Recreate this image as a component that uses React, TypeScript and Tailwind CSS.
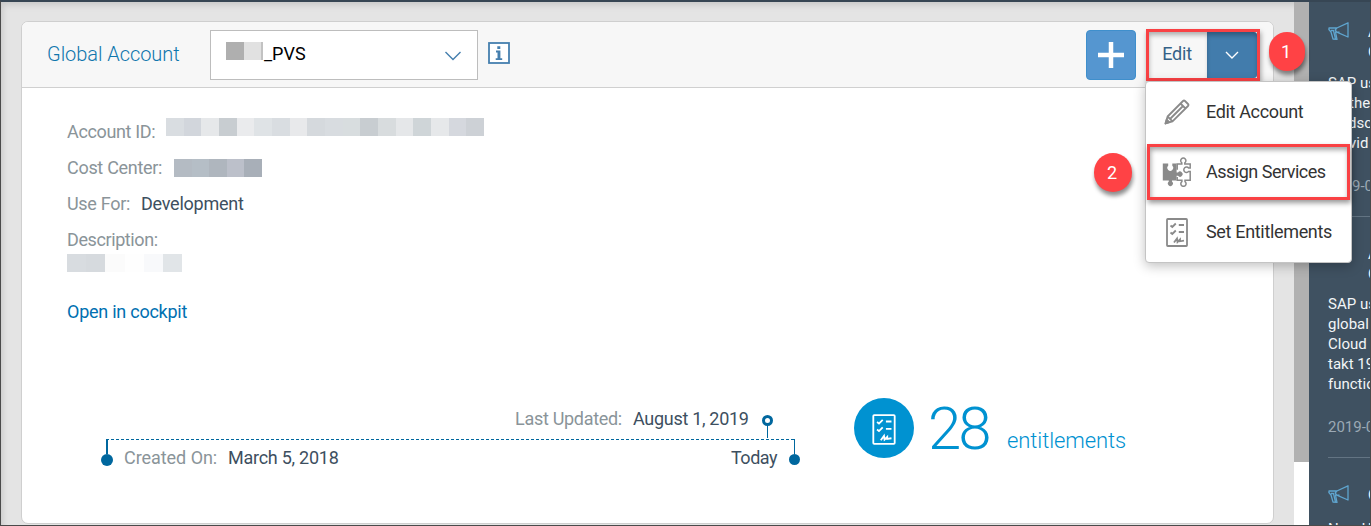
import type { ReactNode } from "react";

function Megaphone() {
  return (
    <svg className="shrink-0" width="22" height="20" viewBox="0 0 22 20" fill="none" stroke="#5fa5cf" strokeWidth="1.3" strokeLinejoin="round">
      <path d="M8.8 6 L20 0.8 V15 L8.8 10.2 M8.8 6 H1 L0.9 7.5 L3 10 L5 17 L9 17.4 L7.5 10.2 H11.5 M8.8 6 L7.2 8 L8.8 10.2 M3 8.5 H5.5 L7.5 17" />
    </svg>
  );
}

function Checklist({ className, w, h, s }: { className: string; w: number; h: number; s: number }) {
  return (
    <svg className={className} width={w} height={h} viewBox="0 0 22 29" fill="none" stroke="currentColor" strokeWidth={s}>
      <rect x="1" y="1" width="20" height="27" rx="0.8" />
      <path d="M4.5 7.5 L6.3 9 L9.8 5.5 M4.5 14.5 L6.3 16 L9.8 12.5 M12.8 7 H18 M12.8 14 H18 M8 24.5 L11 20.5 L11.5 24 L14 21.5 V23.3 L18 22.7" />
    </svg>
  );
}

function Pencil() {
  return (
    <svg width="26" height="26" viewBox="0 0 26 26" fill="none" stroke="#8a8a8a" strokeWidth="1.8" strokeLinejoin="round">
      <path d="M1.5 24.5 L3.6 17.5 L19 2 Q20 1 21 2 L24 5 Q25 6 24 7 L8.5 22.4 Z M16.5 4.5 L21.5 9.5 M19 7 L6 20 M3.6 17.5 L8.5 22.4" />
      <path d="M1.5 24.5 L2.7 20.5 L5.3 23.2 Z" fill="#8a8a8a" />
    </svg>
  );
}

function Puzzle() {
  return (
    <svg width="30" height="30" viewBox="0 0 30 30" fill="none" stroke="#8a8a8a" strokeWidth="1.5">
      <path fill="#8a8a8a" stroke="none" d="M0.8 6.5 H6.2 V8.8 A2.9 2.9 0 1 0 10.3 8.8 V6.5 H14.6 V15.4 H16 A2.6 2.6 0 1 1 16 18.8 H14.6 V23.5 H10 V24.6 A2.5 2.5 0 1 1 6.8 24.6 V23.5 H0.8 Z" />
      <path d="M15.2 12.8 V7 H19.8 V5.8 A2.6 2.6 0 1 1 22.8 5.8 V7 H28.2 V11 H26.6 A2.7 2.7 0 1 0 26.6 14.4 H28.2 V23.3 H23 V24.6 A2.6 2.6 0 1 1 19.9 24.6 V23.3 H15.2 V20" />
    </svg>
  );
}

function Mosaic({ colors, className }: { colors: string[]; className: string }) {
  return (
    <div className={"flex h-[18px] " + className}>
      {colors.map((c, i) => (
        <i key={i} className="block h-full flex-1" style={{ backgroundColor: c }} />
      ))}
    </div>
  );
}

function Label({ children, w }: { children: ReactNode; w: string }) {
  return <span className={"shrink-0 text-[#8a9499] " + w}>{children}</span>;
}

const idColors = ["#d9dde1", "#d2d6dc", "#e6e8ea", "#c8cdd1", "#eaebed", "#dfe3e6", "#d9dde1", "#e8e9eb", "#d5d9dd", "#d8dce0", "#d8dddf", "#c8cdd1", "#d8dcde", "#e5e7e9", "#cfd5d8", "#e6e8ea", "#d5d8de", "#cdd1d6"];

function MenuItem({ icon, text, spacing }: { icon: ReactNode; text: string; spacing: string }) {
  return (
    <div className="flex h-[60px] items-center text-[18px] text-[#333]">
      <span className="ml-[15px] flex w-[31px] justify-center">{icon}</span>
      <span className={"ml-[14px] whitespace-nowrap " + spacing}>{text}</span>
    </div>
  );
}

export default function App() {
  return (
    <div className="relative flex h-[526px] w-[1371px] overflow-hidden bg-[#e4e4e4] font-['Roboto',sans-serif] text-[18px] leading-[24px]">
      <div className="w-[1294px] pt-[21px] pl-[21px] shadow-[inset_5px_7px_6px_-2px_#c9c9c9]">
        <main className="h-[503px] w-[1253px] overflow-hidden rounded-[7px] border border-[#cfcfcf] bg-white">
          <header className="flex h-[66px] items-center border-b border-[#d0d0d0] bg-[#f7f7f7] pl-[25px]">
            <h1 className="-mt-[2px] w-[163px] whitespace-nowrap text-[20px] font-light tracking-[-0.05px] text-[#0f76ad]">Global Account</h1>
            <div className="flex h-[50px] w-[268px] items-center border border-[#bdbdbd] bg-white pl-[15px] text-black">
              <div className="mb-[7px] flex h-[18px] w-[37px]">
                <i className="w-[18px] bg-[#afafaf]" />
                <i className="w-[17px] bg-[#e1e1e1]" />
                <i className="w-[2px] bg-[#c2c2c2]" />
              </div>
              <span className="-mt-[2px] ml-px w-[171px]">_PVS</span>
              <svg width="18" height="10" viewBox="0 0 18 10" fill="none" stroke="#457fae" strokeWidth="1.4" className="ml-[9px] mt-[2px]">
                <path d="M1.5 1 L9 8.5 L16.5 1" />
              </svg>
            </div>
            <svg width="22" height="22" viewBox="0 0 22 22" className="ml-[10px] -mt-[4px]">
              <rect x="1" y="1" width="20" height="20" fill="#fff" stroke="#457fae" strokeWidth="1.8" />
              <path fill="#457fae" d="M9.3 4.2 h3 v2.8 h-3z M8 8.6 h4.4 v7.6 h1.8 v1.8 H7.7 v-1.8 h1.8 v-5.8 H8z" />
            </svg>
            <button className="ml-[576px] flex h-[50px] w-[50px] items-center justify-center rounded-[4px] border border-[#3f8fcc] bg-[#5596d0]">
              <svg width="26" height="26" stroke="#fff" strokeWidth="4.5" className="mt-px"><path d="M0 13 H26 M13 0 V26" /></svg>
            </button>
            <div className="mt-px ml-[10px] flex h-[52px] w-[114px] border-[3px] border-[#f94144] shadow-[1px_3px_5px_rgba(0,0,0,.35)]">
              <span className="flex w-[58px] items-center justify-center bg-[#f7f7f7] pr-[2px] pb-[3px] tracking-[-0.2px] text-[#346187] shadow-[inset_1px_4px_5px_-1px_rgba(0,0,0,.3)]">Edit</span>
              <span className="flex flex-1 items-center justify-center rounded-r-[3px] bg-[#427cac] shadow-[inset_0_4px_5px_-1px_rgba(0,0,0,.3)]">
                <svg width="14" height="9" fill="none" stroke="#fff" strokeWidth="1.4"><path d="M1 1 L7 7 L13 1" /></svg>
              </span>
            </div>
          </header>
          <section className="pl-[45px] pt-[31px]">
            <div className="flex h-[36px] pt-px">
              <Label w="w-[99px] tracking-[-0.35px]">Account ID:</Label>
              <Mosaic colors={idColors} className="-mt-[2px] w-[318px]" />
            </div>
            <div className="flex h-[36px] pt-px">
              <Label w="w-[107px] tracking-[-0.3px]">Cost Center:</Label>
              <Mosaic colors={["#b4bbc3", "#b5bec6", "#afb6be", "#bcc0ca", "#a8afb8"]} className="mt-[3px] w-[88px]" />
            </div>
            <div className="flex h-[36px] pt-px">
              <Label w="w-[74px] tracking-[-0.3px]">Use For:</Label>
              <span className="tracking-[-0.25px] text-[#3d4f60]">Development</span>
            </div>
            <div className="h-[25px] pt-px"><Label w="tracking-[-0.4px]">Description:</Label></div>
            <Mosaic colors={["#d8dce0", "#d6dade", "#fbfbfb", "#fefefe", "#f8f9fb", "#e1e5e8"]} className="mt-[2px] w-[115px]" />
            <div className="mt-[28px] tracking-[-0.25px] text-[#0070b1]">Open in cockpit</div>
          </section>
          <section className="flex pt-[73px] pl-[79px]">
            <div className="w-[700px] pt-[10px]">
              <div className="flex h-[31px] pl-[414px]">
                <Label w="w-[118px] tracking-[-0.3px]">Last Updated:</Label>
                <span className="w-[129px] tracking-[-0.3px] text-[#3d4f60]">August 1, 2019</span>
                <div className="flex w-[11px] flex-col items-center pt-[8px]">
                  <i className="h-[11px] w-[11px] rounded-full border-[3px] border-[#00679e] bg-white" />
                  <i className="w-px flex-1 bg-[#00679e]" />
                </div>
              </div>
              <svg width="695" height="1" className="ml-[5px] mt-px block"><path d="M0 .5 H689" stroke="#00679e" strokeDasharray="3 2" /></svg>
              <div className="flex h-[32px]">
                <div className="flex w-[12px] flex-col items-center">
                  <i className="-mt-px h-[15px] w-[2px] bg-[#00679e]" />
                  <i className="h-[12px] w-[12px] rounded-full bg-[#00679e]" />
                </div>
                <div className="flex pt-[6px] pl-[11px]">
                  <Label w="w-[104px] tracking-[-0.05px]">Created On:</Label>
                  <span className="w-[503px] tracking-[-0.25px] text-[#3d4f60]">March 5, 2018</span>
                  <span className="w-[58px] tracking-[-0.5px] text-[#3d4f60]">Today</span>
                </div>
                <div className="flex w-[11px] flex-col items-center">
                  <i className="-mt-px h-[15px] w-px bg-[#00679e]" />
                  <i className="h-[11px] w-[11px] rounded-full bg-[#00679e]" />
                </div>
              </div>
            </div>
            <div className="mt-px ml-[53px] flex h-[60px] text-[#0092d1]">
              <div className="flex h-[60px] w-[60px] items-center justify-center rounded-full bg-[#0092d1]">
                <Checklist className="mt-[2px] text-white" w={24} h={31} s={1.7} />
              </div>
              <span className="ml-[14px] w-[79px] text-[60px] leading-[62px] font-light tracking-[-3px]">28</span>
              <span className="pt-[29px] text-[22px] leading-[28px] font-light tracking-[-0.08px]">entitlements</span>
            </div>
          </section>
        </main>
      </div>
      <div className="w-[15px] shrink-0 bg-white"><div className="h-[462px] bg-[#b1b1b1]" /></div>
      <aside className="h-[526px] w-[62px] shrink-0 overflow-hidden whitespace-nowrap bg-[#3f5161] pl-[19px] text-[15px] leading-[20px] text-[#f2f5f7]">
        <div className="flex h-[73px] gap-[18px] pt-[22px]"><Megaphone /><div className="text-[15px]">A<br />C</div></div>
        <p>SAP us<br /><span className="ml-[21px]">the</span><br /><span className="ml-[20px]">dsc</span><br /><span className="ml-[21px]">vid</span></p>
        <p className="mt-[23px] h-[41px] border-b border-[#637483] pl-[24px] text-[#9ba9b5]">9-0</p>
        <div className="mt-[27px] h-[50px] pl-[40px]">A<br />C</div>
        <p>SAP us<br />global<br />Cloud<br />takt 19<br />functio</p>
        <p className="mt-[23px] h-[41px] border-b border-[#637483] text-[#9ba9b5]">2019-0</p>
        <div className="mt-[27px] flex h-[34px] gap-[18px]"><Megaphone /><span>C</span></div>
        <p>New U</p>
      </aside>
      <div className="absolute top-[81px] left-[1145px] h-[182px] w-[207px] rounded-[4px] border border-[#c4c4c4] bg-white shadow-[0_3px_12px_rgba(0,0,0,.25)]">
        <MenuItem icon={<Pencil />} text="Edit Account" spacing="tracking-[-0.35px]" />
        <MenuItem icon={<Puzzle />} text="Assign Services" spacing="tracking-[-0.5px]" />
        <MenuItem icon={<Checklist className="text-[#8a8a8a]" w={22} h={29} s={1.8} />} text="Set Entitlements" spacing="tracking-[-0.33px]" />
      </div>
      <div className="absolute top-[144px] left-[1147px] h-[56px] w-[203px] border-[3px] border-[#f94144] shadow-[1px_3px_5px_rgba(0,0,0,.4),inset_1px_3px_5px_rgba(0,0,0,.35)]" />
      <div className="absolute top-[32px] left-[1269px] flex h-[39px] w-[36px] items-center justify-center rounded-full bg-[#ff4245] pr-[2px] text-white shadow-[1px_4px_4px_rgba(0,0,0,.45)]">1</div>
      <div className="absolute top-[153px] left-[1094px] flex h-[39px] w-[38px] items-center justify-center rounded-full bg-[#ff4245] pr-[2px] text-white shadow-[1px_4px_4px_rgba(0,0,0,.45)]">2</div>
      <div className="pointer-events-none absolute inset-0 border border-t-2 border-[#4a4a4a] border-t-[#374654]" />
    </div>
  );
}
